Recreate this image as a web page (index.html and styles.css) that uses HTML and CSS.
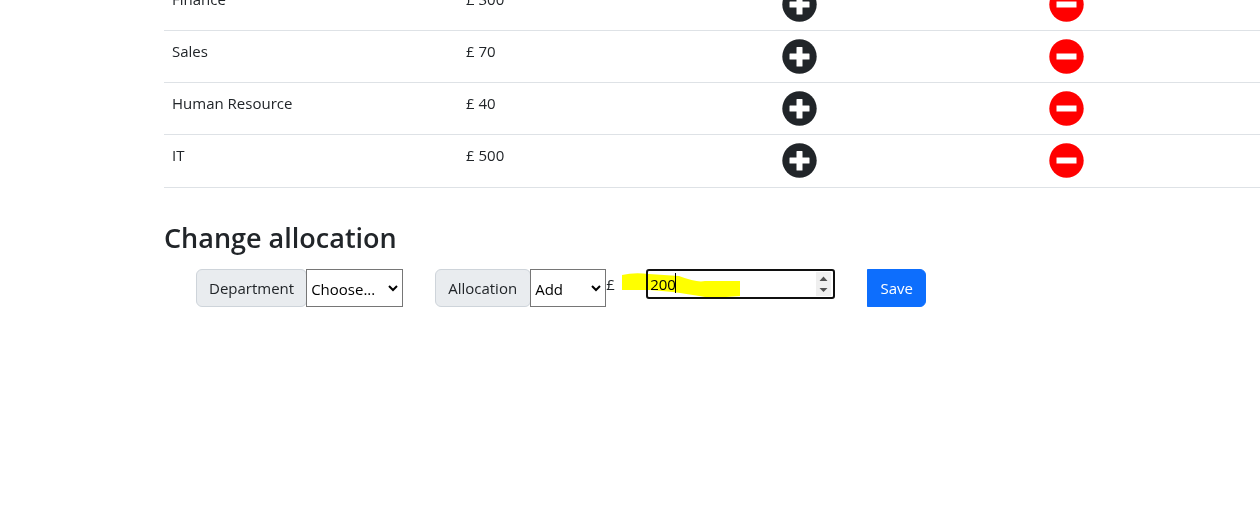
FILE: index.html
```html
<!DOCTYPE html>
<html lang="en">
<head>
<meta charset="utf-8">
<title>Budget allocation</title>
<link rel="stylesheet" href="styles.css">
</head>
<body>
<svg class="symbols" aria-hidden="true">
  <symbol id="plus" viewBox="0 0 35 35"><circle cx="17.5" cy="17.5" r="17.2" fill="currentColor"/><path d="M15 8h5q.5 0 .5.5v6h6.500q.5 0 .5.500v5q0 .5-.5.5h-6.500v6.500q0 .5-.5.500h-5q-.5 0-.5-.5v-6.500h-6.500q-.5 0-.5-.5v-5q0-.5.5-.5h6.500v-6q0-.5.5-.5z" fill="#fff"/></symbol>
  <symbol id="minus" viewBox="0 0 35 35"><circle cx="17.5" cy="17.5" r="17.2" fill="currentColor"/><path d="M7.500 14.500h20v6h-20z" fill="#fff"/></symbol>
  <symbol id="chevron" viewBox="0 0 10 7"><path d="M1 1l4 4 4-4" fill="none" stroke="#000" stroke-width="2"/></symbol>
</svg>
<main class="container">
  <table class="table">
    <colgroup><col class="col-name"><col class="col-amount"><col class="col-increase"><col class="col-decrease"></colgroup>
    <tbody>
      <tr><td>Finance</td><td>£ 300</td><td><button class="icon-button" aria-label="Increase Finance"><svg class="icon"><use href="#plus"/></svg></button></td><td><button class="icon-button red" aria-label="Decrease Finance"><svg class="icon"><use href="#minus"/></svg></button></td></tr>
      <tr><td>Sales</td><td>£ 70</td><td><button class="icon-button" aria-label="Increase Sales"><svg class="icon"><use href="#plus"/></svg></button></td><td><button class="icon-button red" aria-label="Decrease Sales"><svg class="icon"><use href="#minus"/></svg></button></td></tr>
      <tr><td>Human Resource</td><td>£ 40</td><td><button class="icon-button" aria-label="Increase Human Resource"><svg class="icon"><use href="#plus"/></svg></button></td><td><button class="icon-button red" aria-label="Decrease Human Resource"><svg class="icon"><use href="#minus"/></svg></button></td></tr>
      <tr><td>IT</td><td>£ 500</td><td><button class="icon-button" aria-label="Increase IT"><svg class="icon"><use href="#plus"/></svg></button></td><td><button class="icon-button red" aria-label="Decrease IT"><svg class="icon"><use href="#minus"/></svg></button></td></tr>
    </tbody>
  </table>
  <h2 class="heading">Change allocation</h2>
  <form class="form">
    <div class="group">
      <label class="group-label" for="department">Department</label>
      <div class="select-wrap">
        <select class="select department" id="department"><option>Choose...</option><option>Finance</option><option>Sales</option><option>Human Resource</option><option>IT</option></select>
        <svg class="chevron"><use href="#chevron"/></svg>
      </div>
    </div>
    <div class="group">
      <label class="group-label" for="action">Allocation</label>
      <div class="select-wrap">
        <select class="select action" id="action"><option>Add</option><option>Reduce</option></select>
        <svg class="chevron"><use href="#chevron"/></svg>
      </div>
    </div>
    <div class="amount">
      <label class="currency" for="cost">£</label>
      <div class="cost-wrap">
        <input class="cost" id="cost" type="number" value="200">
        <span class="caret"></span>
        <svg class="spinner" viewBox="0 0 15 24"><path d="M0 0h15v24H0z" fill="#efefef"/><path d="M3.500 9l4-4.500 4 4.500zM3.500 16h8l-4 4z" fill="#505050"/></svg>
      </div>
      <svg class="marker" viewBox="0 0 118 26"><path d="M0 3Q12 0 27 2L57 4Q75 11 83 9H118V24L104 25H83Q65 22 51 20L28 18H0z" fill="#ff0"/></svg>
    </div>
    <button class="save" type="button">Save</button>
  </form>
</main>
</body>
</html>
```
FILE: styles.css
```css
* { box-sizing: border-box; }
body {
  margin: 0;
  overflow: hidden;
  background: #fff;
  color: #212529;
  font: 15px/24px "Open Sans", "Noto Sans", sans-serif;
}
.symbols { position: absolute; width: 0; height: 0; }
.container { margin-left: 164px; }
.table {
  width: 100%;
  min-width: 1120px;
  margin-top: -21px;
  border-collapse: separate;
  border-spacing: 0;
  table-layout: fixed;
}
.col-name { width: 294px; }
.col-amount { width: 316px; }
.col-increase { width: 267px; }
.table td {
  height: 52px;
  padding: 8px;
  border-bottom: 1px solid #dee2e6;
  vertical-align: top;
}
.table tr:last-child td { height: 53px; }
.icon-button {
  display: block;
  padding: 0;
  border: 0;
  background: none;
  color: #212529;
}
.icon-button.red { color: #f00; }
.icon { display: block; width: 35px; height: 35px; }
.heading {
  margin: 31px 0 13px;
  font-size: 27px;
  font-weight: 550;
  line-height: 37px;
}
.form {
  display: flex;
  align-items: flex-start;
  margin-left: 32px;
}
.group { display: flex; height: 38px; }
.group + .group { margin-left: 32px; }
.group-label {
  min-width: 96px;
  padding: 6px 12px;
  border: 1px solid #ced4da;
  border-radius: 6px;
  background: #e9ecef;
}
.select-wrap { position: relative; display: flex; margin-left: -1px; }
.select {
  height: 38px;
  margin: 0;
  padding: 2px 4px 0;
  border: 1px solid #767676;
  border-radius: 0;
  appearance: none;
  background: #fff;
  color: #000;
  font: inherit;
}
.department { width: 97px; }
.action { width: 76px; }
.chevron {
  position: absolute;
  right: 5px;
  top: 16px;
  width: 10px;
  height: 7px;
  pointer-events: none;
}
.amount { position: relative; display: flex; }
.currency { width: 40px; padding-top: 3px; }
.cost-wrap { position: relative; }
.cost {
  display: block;
  width: 189px;
  height: 30px;
  margin: 0;
  padding: 0 2px;
  border: 2px solid #101010;
  border-radius: 3px;
  outline: 0;
  appearance: textfield;
  color: #000;
  font: inherit;
}
.cost::-webkit-inner-spin-button { appearance: none; margin: 0; }
.caret {
  position: absolute;
  left: 29px;
  top: 4px;
  width: 1px;
  height: 20px;
  background: #000;
}
.spinner {
  position: absolute;
  right: 4px;
  top: 3px;
  width: 15px;
  height: 24px;
}
.marker {
  position: absolute;
  left: 16px;
  top: 3px;
  width: 118px;
  height: 26px;
  mix-blend-mode: multiply;
  pointer-events: none;
}
.save {
  min-width: 59px;
  height: 38px;
  margin-left: 32px;
  padding: 6px 12px;
  border: 1px solid #0d6efd;
  border-radius: 0 6px 6px 0;
  background: #0d6efd;
  color: #fff;
  font: inherit;
}
```
